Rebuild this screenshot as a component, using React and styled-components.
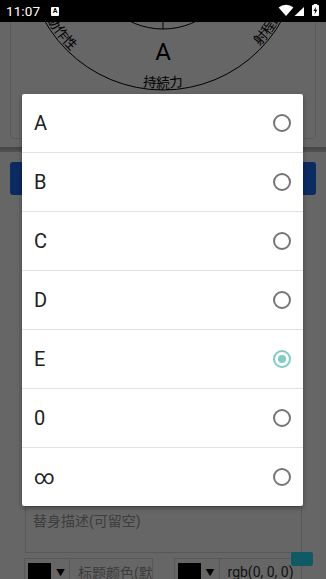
import React from 'react';
import styled, { createGlobalStyle } from 'styled-components';

const GlobalStyle = createGlobalStyle`
  html, body {
    margin: 0;
    padding: 0;
    background: #fff;
  }
  body {
    font-family: Roboto, "Noto Sans", "Noto Sans CJK SC", sans-serif;
  }
`;

const Screen = styled.div`
  position: relative;
  width: 326px;
  height: 579px;
  overflow: hidden;
  background: #fff;
  display: flex;
  flex-direction: column;
`;

const StatusBar = styled.div`
  flex: none;
  height: 22px;
  background: #000;
  color: #fff;
  display: flex;
  align-items: center;
  padding: 0 6px;
  position: relative;
  z-index: 3;
`;

const Clock = styled.span`
  font-size: 13.5px;
  letter-spacing: 0.1px;
`;

const NotifyIcon = styled.span`
  margin-left: 11px;
  width: 8px;
  height: 9px;
  background: #fff;
  color: #000;
  font-size: 7px;
  font-weight: 700;
  line-height: 9px;
  text-align: center;
  border-radius: 1px;
`;

const SysIcons = styled.svg`
  margin-left: auto;
  display: block;
`;

const ScrollArea = styled.div`
  flex: 1;
  overflow: hidden;
  position: relative;
`;

const ScrollContent = styled.div`
  margin-top: ${p => -p.$offset}px;
`;

const ChartCard = styled.div`
  margin: 0 10px;
  border: 1px solid #e0e0e0;
  border-radius: 4px;
  padding-bottom: 44px;
  svg {
    display: block;
  }
`;

const Band = styled.div`
  margin-top: 8px;
  height: 5px;
  background: linear-gradient(#a8a8a8, #cfcfcf);
`;

const PrimaryButton = styled.button`
  display: block;
  width: calc(100% - 20px);
  margin: 10px 10px 0;
  height: 33px;
  border: none;
  border-radius: 3px;
  background: #1c6cf8;
  color: #fff;
  font-family: inherit;
  font-size: 14px;
`;

const Form = styled.div`
  display: flex;
  flex-direction: column;
  gap: 10px;
  padding: 21px 24px 0 25px;
`;

const Input = styled.input`
  box-sizing: border-box;
  height: 48px;
  border: 1px solid #ddd;
  padding: 0 7px;
  font-family: Roboto, "Noto Sans CJK SC", sans-serif;
  font-size: 14px;
  color: #333;
  &::placeholder {
    color: #999;
  }
`;

const TextareaWrap = styled.div`
  position: relative;
`;

const Textarea = styled.textarea`
  display: block;
  box-sizing: border-box;
  width: 100%;
  height: 47px;
  border: 1px solid #ddd;
  padding: 4px 7px;
  resize: none;
  font-family: Roboto, "Noto Sans CJK SC", sans-serif;
  font-size: 14px;
  line-height: 20px;
  &::placeholder {
    color: #999;
  }
`;

const Handle = styled.span`
  position: absolute;
  top: 46px;
  right: -11px;
  width: 22px;
  height: 14px;
  border-radius: 2px;
  background: #24e4ff;
`;

const ColorRow = styled.div`
  display: grid;
  grid-template-columns: 1fr 1fr;
  gap: 21px;
  margin: -5px 0 0 -1px;
`;

const ColorBox = styled.div`
  box-sizing: border-box;
  height: 28px;
  border: 1px solid #ddd;
  display: flex;
  align-items: center;
  padding-left: 3px;
  overflow: hidden;
`;

const Swatch = styled.span`
  flex: none;
  width: 23px;
  height: 20px;
  margin-top: 4px;
  align-self: flex-start;
  background: ${p => p.$color};
`;

const Caret = styled.span`
  flex: none;
  margin: 0 4px 0 5px;
  font-size: 9px;
  color: #000;
`;

const ColorText = styled.span`
  align-self: stretch;
  display: flex;
  align-items: center;
  border-left: 1px solid #ddd;
  padding-left: 8px;
  font-family: Roboto, "Noto Sans CJK SC", sans-serif;
  font-size: 14px;
  white-space: nowrap;
  color: ${p => (p.$muted ? '#999' : '#333')};
`;

const Overlay = styled.div`
  position: absolute;
  top: 22px;
  left: 0;
  right: 0;
  bottom: 0;
  z-index: 2;
  background: rgba(0, 0, 0, 0.6);
  padding: 72px 0 0 22px;
`;

const Dialog = styled.div`
  width: 281px;
  background: #fff;
  border-radius: 2px;
  box-shadow: 0 2px 5px rgba(0, 0, 0, 0.35);
`;

const Option = styled.div`
  height: 58px;
  display: flex;
  align-items: center;
  justify-content: space-between;
  padding: 0 12px;
  & + & {
    border-top: 1px solid #e2e2e2;
  }
`;

const OptionLabel = styled.span`
  font-size: 20px;
  color: #212121;
`;

const Radio = styled.span`
  box-sizing: border-box;
  width: 18px;
  height: 18px;
  border-radius: 50%;
  border: 2px solid ${p => (p.$checked ? '#80cbc4' : '#757575')};
  display: flex;
  align-items: center;
  justify-content: center;
  &::after {
    content: '';
    width: 8px;
    height: 8px;
    border-radius: 50%;
    background: ${p => (p.$checked ? '#80cbc4' : 'transparent')};
  }
`;

// chart geometry
const CX = 152;
const CY = 160;
const R_OUT = 136;
const R_IN = 75;
const R_TEXT = 133.5;
const R_GRADE = 97;

// offsets are along a ring that starts at 3 o'clock and runs counter-clockwise
const stats = [
  { name: '破壊力', angle: 0, offset: '25%', grade: 'B' },
  { name: 'スピード', angle: 60, offset: '8.9%', grade: 'B' },
  { name: '射程距離', angle: 120, offset: '91.1%', grade: 'C' },
  { name: '持続力', angle: 180, offset: '75%', grade: 'A' },
  { name: '精密動作性', angle: 240, offset: '58.9%', grade: 'D' },
  { name: '成長性', angle: 300, offset: '41.1%', grade: 'E' },
];

const polar = (r, deg) => {
  const a = (deg * Math.PI) / 180;
  return [CX + r * Math.sin(a), CY - r * Math.cos(a)];
};

const textRing =
  `M ${CX + R_TEXT} ${CY} A ${R_TEXT} ${R_TEXT} 0 1 0 ${CX - R_TEXT} ${CY} ` +
  `A ${R_TEXT} ${R_TEXT} 0 1 0 ${CX + R_TEXT} ${CY}`;

function StandChart() {
  return (
    <svg width="304" height="300" viewBox="0 0 304 300">
      <defs>
        <path id="ring" d={textRing} fill="none" />
      </defs>
      <circle cx={CX} cy={CY} r={R_OUT} fill="none" stroke="#000" strokeWidth="1" />
      <circle cx={CX} cy={CY} r={R_IN} fill="none" stroke="#000" strokeWidth="1" />
      {stats.map(s => {
        const [x, y] = polar(R_IN, s.angle);
        return <line key={s.name} x1={CX} y1={CY} x2={x} y2={y} stroke="#000" strokeWidth="1" />;
      })}
      {stats.map(s => {
        const [x, y] = polar(R_GRADE, s.angle);
        return (
          <text
            key={s.name + 'g'}
            x={x}
            y={y + 8.5}
            textAnchor="middle"
            fontFamily="Roboto, sans-serif"
            fontSize="24"
            fill="#000"
          >
            {s.grade}
          </text>
        );
      })}
      {stats.map(s => (
        <text
          key={s.name + 't'}
          fontFamily='"Noto Sans CJK JP", sans-serif'
          fontSize="13.5"
          fill="#000"
          textAnchor="middle"
        >
          <textPath href="#ring" startOffset={s.offset}>
            {s.name}
          </textPath>
        </text>
      ))}
    </svg>
  );
}

const options = ['A', 'B', 'C', 'D', 'E', '0', '∞'];

export default function App() {
  const selected = 'E';

  return (
    <Screen>
      <GlobalStyle />
      <StatusBar>
        <Clock>11:07</Clock>
        <NotifyIcon>A</NotifyIcon>
        <SysIcons width="42" height="22" viewBox="0 0 42 22">
          <path d="M8 16 L0.6 7.6 A 11 11 0 0 1 15.4 7.6 Z" fill="#fff" />
          <path d="M26 7 L26 16 L16.5 16 Z" fill="#fff" />
          <rect x="34" y="5" width="7" height="11" rx="0.8" fill="#fff" />
          <rect x="35.8" y="4" width="3.4" height="1.5" fill="#fff" />
          <path d="M38.2 6.8 L35.4 11 H37.2 L36.4 14.4 L39.4 9.8 H37.6 Z" fill="#000" />
        </SysIcons>
      </StatusBar>

      <ScrollArea>
        <ScrollContent $offset={229}>
          <ChartCard>
            <StandChart />
          </ChartCard>
          <Band />
          <PrimaryButton>生成替身面板</PrimaryButton>
          <Form>
            <Input placeholder="替身名称" />
            <Input placeholder="替身使者" />
            <Input placeholder="替身能力" />
            <Input placeholder="能力类型" />
            <Input placeholder="出处" />
            <TextareaWrap>
              <Textarea placeholder="替身描述(可留空)" />
              <Handle />
            </TextareaWrap>
            <ColorRow>
              <ColorBox>
                <Swatch $color="#000" />
                <Caret>▼</Caret>
                <ColorText $muted>标题颜色(默认)</ColorText>
              </ColorBox>
              <ColorBox>
                <Swatch $color="#000" />
                <Caret>▼</Caret>
                <ColorText>rgb(0, 0, 0)</ColorText>
              </ColorBox>
            </ColorRow>
          </Form>
        </ScrollContent>
      </ScrollArea>

      <Overlay>
        <Dialog>
          {options.map(o => (
            <Option key={o}>
              <OptionLabel>{o}</OptionLabel>
              <Radio $checked={o === selected} />
            </Option>
          ))}
        </Dialog>
      </Overlay>
    </Screen>
  );
}
